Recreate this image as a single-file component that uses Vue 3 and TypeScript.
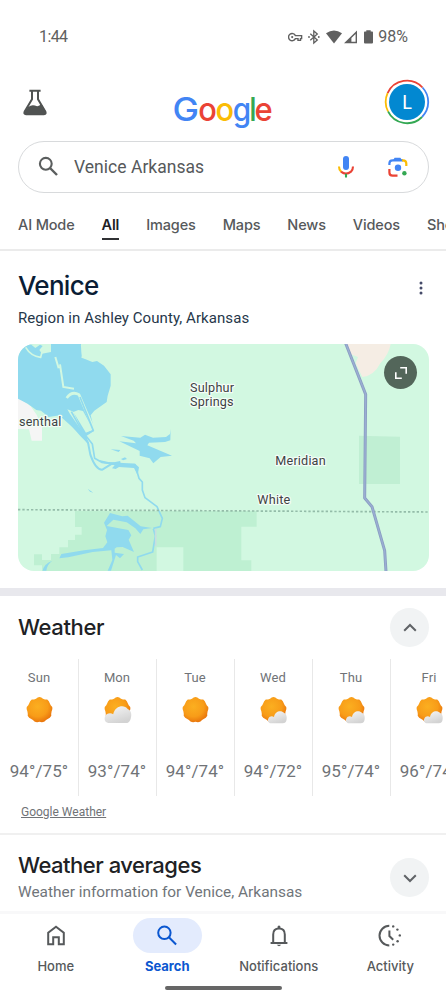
<script setup lang="ts">
import { ref } from 'vue';

interface Day {
    name: string;
    temps: string;
    sky: 'sun' | 'cloudy' | 'partly';
}

const query = ref('Venice Arkansas');
const activeTab = ref('All');
const activeNav = ref('Search');

const tabs = ['AI Mode', 'All', 'Images', 'Maps', 'News', 'Videos', 'Shopping'];

const days: Day[] = [
    { name: 'Sun', temps: '94°/75°', sky: 'sun' },
    { name: 'Mon', temps: '93°/74°', sky: 'cloudy' },
    { name: 'Tue', temps: '94°/74°', sky: 'sun' },
    { name: 'Wed', temps: '94°/72°', sky: 'partly' },
    { name: 'Thu', temps: '95°/74°', sky: 'partly' },
    { name: 'Fri', temps: '96°/74°', sky: 'partly' },
];

const navItems = ['Home', 'Search', 'Notifications', 'Activity'];
</script>

<template>
    <div class="screen">
        <div class="status">
            <span>1:44</span>
            <div class="status-right">
                <svg width="88" height="16" viewBox="0 0 88 16">
                    <g fill="none" stroke="#606060" stroke-width="1.4">
                        <path d="M7.4 6.6A3.6 3.6 0 1 0 7.4 9.6H10V11.4H12.5V9.6H13.6V6.6Z" />
                        <path d="M22.3 4.7L29.3 11L25.8 14V2L29.3 5L22.3 11.3" stroke-width="1.3" />
                    </g>
                    <g fill="#606060">
                        <circle cx="4.2" cy="8.1" r="1.1" />
                        <circle cx="21" cy="8" r=".9" />
                        <circle cx="30.8" cy="8" r=".9" />
                        <path d="M38 4.2Q46 -1.4 54 4.2L46 14.4Z" />
                        <path d="M56 14.2L69 1.6V14.2ZM63.4 12.8H67.6V5L63.4 9Z" fill-rule="evenodd" />
                        <path d="M78.3 1.3H82.7V2.6H84.2Q85 2.6 85 3.6V13.4Q85 14.4 84 14.4H77Q76 14.4 76 13.4V3.6Q76 2.6 76.8 2.6H78.3Z" />
                    </g>
                </svg>
                <span>98%</span>
            </div>
        </div>

        <header class="header">
            <svg class="flask" width="28" height="28" viewBox="0 0 28 28">
                <path d="M8.4 1.8H19.6M11 2V10.2L3.6 22.8Q2.7 25.2 5 25.2H23Q25.3 25.2 24.4 22.8L17 10.2V2" fill="none" stroke="#505352" stroke-width="2" />
                <path d="M7 18Q11 15.2 14 16.6Q17.5 18.6 20.4 14.8L25 23Q25.4 25.6 23 25.6H5Q2.8 25.4 3.4 23.4Z" fill="#505352" />
            </svg>
            <svg class="logo" width="102" height="42" viewBox="0 0 102 42">
                <g class="logo-text">
                    <text x="-.6" y="29.6" textLength="26.5" lengthAdjust="spacingAndGlyphs" fill="#4285f4">G</text>
                    <text x="25.3" y="29.6" textLength="18.6" lengthAdjust="spacingAndGlyphs" fill="#ea4335">o</text>
                    <text x="42.5" y="29.6" textLength="18.6" lengthAdjust="spacingAndGlyphs" fill="#fbbc05">o</text>
                    <text x="59.7" y="29.6" textLength="18.4" lengthAdjust="spacingAndGlyphs" fill="#4285f4">g</text>
                    <text x="76.3" y="29.6" textLength="7.4" lengthAdjust="spacingAndGlyphs" fill="#34a853">l</text>
                    <text x="81.4" y="29.6" textLength="18.2" lengthAdjust="spacingAndGlyphs" fill="#ea4335">e</text>
                </g>
            </svg>
            <div class="avatar">
                <svg width="46" height="46" viewBox="0 0 46 46" fill="none" stroke-width="1.8">
                    <path d="M3.6 14.2A21.2 21.2 0 0 1 38.5 8.5" stroke="#ea4335" />
                    <path d="M38.5 8.5A21.2 21.2 0 0 1 38 38" stroke="#4285f4" />
                    <path d="M38 38A21.2 21.2 0 0 1 4 32.4" stroke="#34a853" />
                    <path d="M4 32.4A21.2 21.2 0 0 1 3.6 14.2" stroke="#fbbc05" />
                </svg>
                <span>L</span>
            </div>
        </header>

        <div class="search">
            <svg class="magnifier" width="24" height="24" viewBox="0 0 24 24" fill="none" stroke="#5b5e5e" stroke-width="2.1">
                <circle cx="8.8" cy="8.8" r="5.9" />
                <path d="M13 13L20 20" stroke-width="2.4" />
            </svg>
            <span class="query">{{ query }}</span>
            <svg class="mic" width="18" height="24" viewBox="0 0 18 24" fill="none" stroke-width="2.1">
                <rect x="6" y="1" width="6" height="14" rx="3" fill="#4285f4" />
                <path d="M2 11.5Q2 15 4.2 16.8" stroke="#fbbc05" />
                <path d="M4 16.6Q9 20.7 14 16.6Q16 14.8 16 11.5" stroke="#ea4335" />
                <path d="M9 18.8V22.5" stroke="#34a853" />
            </svg>
            <svg class="lens" width="22" height="22" viewBox="0 0 22 22" fill="none" stroke-width="2.2">
                <path d="M2.4 9V7.5Q2.4 4.3 5.6 4.3H16" stroke="#4285f4" />
                <path d="M6 4.2L7.6 1.8H13.4L15 4.2Z" fill="#4285f4" />
                <path d="M15 4.3H15.8Q19.3 4.3 19.3 7.5V10" stroke="#fbbc05" />
                <path d="M2.4 13V16.4Q2.4 19.6 5.6 19.6H10.5" stroke="#ea4335" />
                <circle cx="11" cy="11.8" r="3.2" fill="#4285f4" />
                <circle cx="17.4" cy="17.2" r="2.2" fill="#34a853" />
            </svg>
        </div>

        <nav class="tabs">
            <span v-for="tab in tabs" :key="tab" :class="{ active: tab === activeTab }" @click="activeTab = tab">{{ tab }}</span>
        </nav>

        <section class="place">
            <div class="place-head">
                <h1>Venice</h1>
                <svg width="6" height="16" viewBox="0 0 6 16" fill="#454a69">
                    <circle cx="3" cy="3" r="1.5" />
                    <circle cx="3" cy="8" r="1.5" />
                    <circle cx="3" cy="13" r="1.5" />
                </svg>
            </div>
            <p>Region in Ashley County, Arkansas</p>
            <div class="map">
                <svg width="411" height="227" viewBox="24 26 1233 681">
                    <rect x="24" y="26" width="1233" height="681" fill="#d2f8e1" />
                    <!-- darker forest land -->
                    <path d="M195 527H740V574H694V675H724V707H520V636H440V707H96V690H72V657H96V674H123V656H148V636H174V614H195V598H215V575H195Z" fill="#bef0d2" />
                    <path d="M1047 301L1170 304V446H1047Z" fill="#c0efd3" />
                    <!-- town areas -->
                    <path d="M24 185L62 213L80 238L96 275V316H65L57 282L24 281Z" fill="#f5f5f5" />
                    <path d="M1010 26H1142Q1137 56 1111 84Q1092 122 1057 125L1037 84L1044 65L1014 54Z" fill="#f5ede4" />
                    <!-- lakes -->
                    <g fill="#90daee">
                        <path d="M24 26H213L216 67L247 80L261 77L282 91L302 117V151L293 181L290 200L253 226L242 240L252 281L244 292L229 302L238 330L211 302L155 239L116 245L93 226L79 224L53 205L24 190Z" />
                        <path d="M333 302L391 307L405 298L429 307L468 305L480 296L482 280L481 315L465 320L417 322L412 330L486 361L452 365L430 384L419 369L389 361V347L328 318L378 324L371 316Z" />
                        <path d="M302 342L331 344L326 350Z" />
                        <path d="M333 371L345 366L351 371L339 375Z" />
                        <path d="M268 374L295 380L375 385L387 396L383 420L372 398L327 395L317 401L306 399L314 390L276 382Z" />
                        <path d="M233 460L250 472L240 469Z" />
                        <path d="M300 533L337 543L353 541L392 573L426 578L400 582L391 596L376 579L350 561L310 553L290 572L355 584L364 600L356 613L372 650L338 635L320 636L314 640V652L342 656L330 669L318 659L303 706H293L307 674L304 645L248 650L175 666L148 669L154 656L222 645L279 638L292 621L286 603L291 584L282 562Z" />
                        <path d="M98 706Q102 685 127 676Q112 686 109 706Z" />
                    </g>
                    <!-- islands and levees -->
                    <path d="M50 26H123V50L96 55L88 44L98 32L90 28L76 38L64 28Z" fill="#d2f8e1" />
                    <path d="M172 222L190 229L218 290L180 236ZM205 224L219 227L250 283L228 292L190 230Z" fill="#d2f8e1" />
                    <g fill="none" stroke="#d2f8e1" stroke-width="5">
                        <path d="M47 36Q62 62 92 66L96 50" stroke-width="5" />
                        <path d="M136 65L146 99M150 87L160 155L192 160" stroke-width="6" />
                        <path d="M170 188Q186 166 207 178L225 220L253 284" stroke-width="8" />
                        <path d="M216 68L222 47L214 28" stroke-width="4" />
                    </g>
                    <path d="M213 26L230 50L228 70L216 67Z" fill="#d2f8e1" />
                    <!-- river -->
                    <g fill="none" stroke="#90daee" stroke-width="6" stroke-linejoin="round">
                        <path d="M220 302L234 322L241 358Q257 404 277 403L306 385L331 380" />
                        <path d="M158 243L226 304" stroke-width="9" />
                        <path d="M184 229L222 298L250 286L210 185" stroke-width="5" />
                        <path d="M228 302L247 326L254 369L275 381L331 388L375 388L387 429L397 440V464L405 487L441 514L457 549L451 574L430 579" stroke-width="5" />
                        <path d="M430 580L436 602L428 650L383 665V679L397 704" stroke-width="5" />
                    </g>
                    <path d="M437 580V632" stroke="#c8dde0" stroke-width="5" />
                    <!-- state line -->
                    <path d="M24 523L1257 530" stroke="#94bca9" stroke-width="5" stroke-dasharray="7 6" />
                    <!-- highway -->
                    <g fill="none" stroke-linejoin="round">
                        <path d="M1007 24L1067 177L1064 488L1086 514L1124 646L1128 709" stroke="#8b9ec2" stroke-width="9" />
                        <path d="M1007 24L1067 177L1064 488L1086 514L1124 646L1128 709" stroke="#9aaed3" stroke-width="4" />
                    </g>
                    <g class="map-labels">
                        <text x="27" y="273" textLength="127">senthal</text>
                        <text x="540" y="171" textLength="132">Sulphur</text>
                        <text x="540" y="211" textLength="131">Springs</text>
                        <text x="796" y="390" textLength="151">Meridian</text>
                        <text x="742" y="507" textLength="99">White</text>
                    </g>
                </svg>
                <button class="expand" aria-label="Expand map">
                    <svg width="14" height="14" viewBox="0 0 14 14" fill="none" stroke="#fff" stroke-width="1.6">
                        <path d="M6.2 1.8H12.2V7.8M1.8 6.2V12.2H7.8" />
                    </svg>
                </button>
            </div>
        </section>

        <section class="weather">
            <div class="weather-head">
                <h2>Weather</h2>
                <button class="round">
                    <svg width="14" height="10" viewBox="0 0 14 10" fill="none" stroke="#606367" stroke-width="2"><path d="M1.2 7.8L7 2L12.8 7.8" /></svg>
                </button>
            </div>
            <svg class="defs" width="0" height="0">
                <defs>
                    <radialGradient id="sunFill" cx=".42" cy=".38" r=".62">
                        <stop offset="0" stop-color="#fbaf20" />
                        <stop offset=".65" stop-color="#f89c18" />
                        <stop offset="1" stop-color="#ea780d" />
                    </radialGradient>
                    <linearGradient id="cloudFill" x1="0" y1="0" x2=".5" y2="1">
                        <stop offset="0" stop-color="#f8f8f8" />
                        <stop offset="1" stop-color="#d3d3d3" />
                    </linearGradient>
                </defs>
            </svg>
            <div class="days">
                <div v-for="day in days" :key="day.name" class="day">
                    <span class="day-name">{{ day.name }}</span>
                    <svg width="29" height="30" viewBox="0 0 30 30">
                        <path d="M15 1.5Q17 1.8 18.6 3.3Q20.5 4.2 23 4.2Q25 5.8 25.6 8Q26.3 10 28.2 12Q28.8 14 27.5 16.5Q27 18.5 27.2 21Q26 23.3 23.5 24.2Q21.7 25 20.2 27Q17.8 28 15 27.2Q12.2 28 9.8 27Q8.3 25 6.5 24.2Q4 23.3 2.8 21Q3 18.5 2.5 16.5Q1.2 14 1.8 12Q3.7 10 4.4 8Q5 5.8 7 4.2Q9.5 4.2 11.4 3.3Q13 1.8 15 1.5Z" fill="url(#sunFill)" />
                        <path v-if="day.sky === 'cloudy'" d="M7 28.5C2.5 28.5 1 25.5 2 22C3 18.5 8 17.5 10.5 19.5C12.5 10.5 22 9 25.5 14C29.5 15.5 30 20 28.5 24.5C27.5 27.5 26 28.5 23.5 28.5Z" fill="url(#cloudFill)" />
                        <path v-if="day.sky === 'partly'" d="M13 28.8C9.5 28.8 8.6 26 9.7 23.8C10.8 21.4 13.8 21 15.5 22.3C16.5 16 23 14.5 26 18.2C28.8 19.2 29.2 23.5 28.2 26.5C27.5 28.3 26.5 28.8 24.7 28.8Z" fill="url(#cloudFill)" />
                    </svg>
                    <span class="temps">{{ day.temps }}</span>
                </div>
            </div>
            <a class="source">Google Weather</a>
        </section>

        <section class="averages">
            <div>
                <h2>Weather averages</h2>
                <p>Weather information for Venice, Arkansas</p>
            </div>
            <button class="round">
                <svg width="14" height="10" viewBox="0 0 14 10" fill="none" stroke="#606367" stroke-width="2"><path d="M1.2 2.2L7 8L12.8 2.2" /></svg>
            </button>
        </section>

        <footer class="bottom">
            <div class="bottom-items">
                <div v-for="item in navItems" :key="item" class="nav-item" :class="{ current: item === activeNav }" @click="activeNav = item">
                    <div class="pill">
                        <svg width="26" height="26" viewBox="0 0 26 26" fill="none" stroke="currentColor" stroke-width="2">
                            <path v-if="item === 'Home'" d="M5.2 21.3V9.8L13 3.8L20.8 9.8V21.3H15.8V14.3H10.2V21.3Z" />
                            <template v-else-if="item === 'Search'">
                                <circle cx="10.4" cy="9.8" r="6.2" />
                                <path d="M14.9 14.3L22.1 21.5" />
                            </template>
                            <template v-else-if="item === 'Notifications'">
                                <path d="M4.6 20H21.4M7.2 20V11.5Q7.2 5.5 13 5.5Q18.8 5.5 18.8 11.5V20" />
                                <path d="M11.6 5V3.4Q13 1.8 14.4 3.4V5ZM10.8 21.8H15.2Q13 24.6 10.8 21.8Z" fill="currentColor" stroke="none" />
                            </template>
                            <template v-else>
                                <path d="M12.3 2.8A9.8 9.8 0 0 0 12.3 22.4M12.4 7.4V13L16.2 16.8" />
                                <g fill="currentColor" stroke="none">
                                    <circle cx="16.2" cy="3.4" r="1.2" />
                                    <circle cx="20.4" cy="6.6" r="1.2" />
                                    <circle cx="22.8" cy="12.4" r="1.2" />
                                    <circle cx="20.6" cy="18.2" r="1.2" />
                                    <circle cx="16.2" cy="21.6" r="1.2" />
                                </g>
                            </template>
                        </svg>
                    </div>
                    <span>{{ item }}</span>
                </div>
            </div>
            <div class="handle"></div>
        </footer>
    </div>
</template>

<style>
body {
    margin: 0;
    background: #fff;
}
</style>

<style scoped>
.screen {
    width: 446px;
    height: 1000px;
    overflow: hidden;
    display: flex;
    flex-direction: column;
    background: #fff;
    font-family: Inter, Roboto, sans-serif;
    color: #56595b;
}

h1, h2, p {
    margin: 0;
    font-weight: 500;
}

svg {
    display: block;
    flex: none;
}

button {
    border: none;
    padding: 0;
    display: flex;
    align-items: center;
    justify-content: center;
}

.status {
    height: 74px;
    box-sizing: border-box;
    padding: 0 38px 0 39px;
    display: flex;
    align-items: center;
    justify-content: space-between;
    font: 400 16px/20px Roboto, sans-serif;
    color: #606060;
}

.status > span {
    letter-spacing: -0.6px;
}

.status-right {
    display: flex;
    align-items: center;
    gap: 2px;
}

.header {
    height: 67px;
    box-sizing: border-box;
    padding: 5px 16px 0 22px;
    display: grid;
    grid-template-columns: 151px 102px 1fr;
    align-items: start;
}

.flask {
    margin-top: 10px;
    margin-left: -1px;
}

.logo {
    margin-top: 12px;
    overflow: visible;
}

.logo-text {
    font: 500 33px Inter, sans-serif;
}

.avatar {
    justify-self: end;
    display: grid;
    place-items: center;
}

.avatar > * {
    grid-area: 1 / 1;
}

.avatar span {
    width: 36px;
    height: 36px;
    border-radius: 50%;
    background: #0288d1;
    color: #fff;
    font: 400 19px/36px Lato, sans-serif;
    text-align: center;
}

.search {
    flex: none;
    height: 52px;
    margin: 0 17px 0 18px;
    box-sizing: border-box;
    border: 1px solid #d8dadc;
    border-radius: 26px;
    display: flex;
    align-items: center;
    padding: 0 19px 0 18px;
}

.query {
    margin-left: 13px;
    flex: 1;
    font: 400 17.5px/24px Roboto, sans-serif;
    letter-spacing: 0.03px;
    margin-top: -1px;
}

.mic {
    margin-right: 32px;
}

.tabs {
    flex: none;
    height: 58px;
    box-sizing: border-box;
    border-bottom: 2px solid #ebebeb;
    padding: 21px 0 0 18px;
    display: flex;
    gap: 27px;
    overflow: hidden;
    white-space: nowrap;
    font-size: 14.5px;
    font-weight: 500;
    line-height: 22px;
    letter-spacing: -0.15px;
}

.tabs span {
    height: 24px;
}

.tabs .active {
    color: #202124;
    font-weight: 600;
    border-bottom: 2px solid #303134;
}

.place {
    flex: none;
    height: 337px;
    padding: 0 17px 0 18px;
    border-bottom: 8px solid #e8e8ed;
    color: #0a1d35;
}

.place-head {
    height: 56px;
    padding: 7px 5px 0 0;
    box-sizing: border-box;
    display: flex;
    align-items: center;
    justify-content: space-between;
}

.place-head svg {
    margin-top: 11px;
}

h1 {
    font-size: 26px;
    line-height: 32px;
    margin-top: 7px;
    letter-spacing: -0.7px;
}

.place p {
    font: 400 15px/22px Roboto, sans-serif;
    letter-spacing: 0.07px;
    color: #26374a;
}

.map {
    position: relative;
    height: 227px;
    margin-top: 15px;
    border-radius: 16px;
    overflow: hidden;
}

.map-labels {
    font: 400 38px Roboto, sans-serif;
    fill: #3e4244;
    stroke: #f4fdf7;
    stroke-width: 7px;
    paint-order: stroke;
    stroke-linejoin: round;
}

.expand {
    position: absolute;
    top: 12px;
    right: 12px;
    width: 33px;
    height: 33px;
    border-radius: 50%;
    background: #53665a;
}

.weather {
    flex: none;
    height: 237px;
    border-bottom: 2px solid #f0f0f0;
}

.weather-head {
    height: 63px;
    box-sizing: border-box;
    padding: 0 17px 0 18px;
    display: flex;
    align-items: center;
    justify-content: space-between;
}

h2 {
    font-size: 22px;
    line-height: 28px;
    color: #202124;
    letter-spacing: -0.5px;
}

.weather-head h2 {
    letter-spacing: -0.38px;
    margin-top: -1px;
}

.round {
    width: 39px;
    height: 39px;
    border-radius: 50%;
    background: #f1f3f4;
}

.defs {
    position: absolute;
}

.days {
    display: flex;
    width: 468px;
    height: 137px;
    padding-left: 1px;
}

.day {
    width: 78px;
    box-sizing: border-box;
    padding-right: 1px;
    border-right: 1px solid #e8e8e8;
    display: flex;
    flex-direction: column;
    align-items: center;
    font-family: Roboto, sans-serif;
    color: #707377;
}

.day-name {
    font-size: 13px;
    line-height: 18px;
    margin: 10px 0 8px;
    letter-spacing: 0.1px;
}

.temps {
    margin-top: 35px;
    font-size: 17px;
    line-height: 22px;
    letter-spacing: 0.1px;
    white-space: nowrap;
}

.source {
    display: block;
    margin: 7px 0 0 21px;
    font: 400 12px/18px Roboto, sans-serif;
    color: #707377;
    text-decoration: underline;
}

.averages {
    flex: none;
    height: 76px;
    box-sizing: border-box;
    padding: 9px 17px 0 18px;
    display: flex;
    align-items: center;
    justify-content: space-between;
}

.averages p {
    font: 400 15.4px/26px Roboto, sans-serif;
    color: #70757a;
}

.bottom {
    flex: 1;
    border-top: 3px solid #f8f8f9;
}

.bottom-items {
    display: grid;
    grid-template-columns: repeat(4, 1fr);
    height: 72px;
}

.nav-item {
    display: flex;
    flex-direction: column;
    align-items: center;
    padding-top: 4px;
    color: #56595b;
    font-size: 13px;
    line-height: 18px;
    font-weight: 500;
}

.pill {
    width: 69px;
    height: 35px;
    border-radius: 18px;
    display: flex;
    align-items: center;
    justify-content: center;
    margin-bottom: 4px;
}

.current {
    color: #0b57d0;
    font-weight: 700;
}

.current .pill {
    background: #e3ebfd;
}

.handle {
    width: 117px;
    height: 4px;
    border-radius: 2px;
    background: #666;
    margin: 0 auto;
}
</style>
